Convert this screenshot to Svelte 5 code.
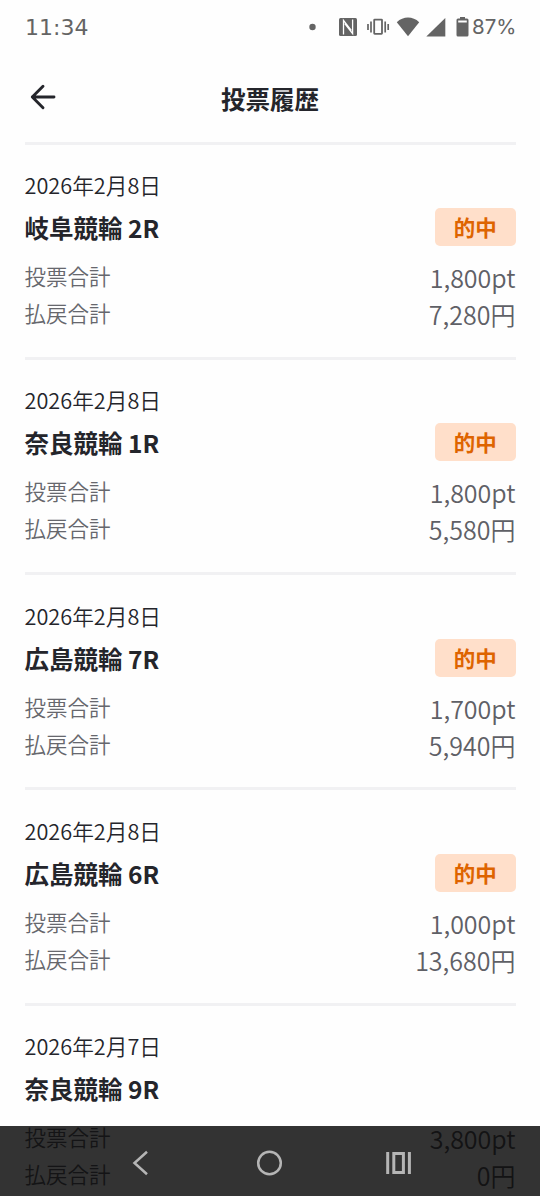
<script lang="ts">
	interface Vote {
		id: number;
		date: string;
		race: string;
		hit: boolean;
		total: string;
		payout: string;
	}

	const votes: Vote[] = [
		{ id: 1, date: '2026年2月8日', race: '岐阜競輪 2R', hit: true, total: '1,800pt', payout: '7,280円' },
		{ id: 2, date: '2026年2月8日', race: '奈良競輪 1R', hit: true, total: '1,800pt', payout: '5,580円' },
		{ id: 3, date: '2026年2月8日', race: '広島競輪 7R', hit: true, total: '1,700pt', payout: '5,940円' },
		{ id: 4, date: '2026年2月8日', race: '広島競輪 6R', hit: true, total: '1,000pt', payout: '13,680円' },
		{ id: 5, date: '2026年2月7日', race: '奈良競輪 9R', hit: false, total: '3,800pt', payout: '0円' }
	];
</script>

<div class="screen">
	<div class="status">
		<span class="clock">11:34</span>
		<svg class="status-icons" viewBox="0 0 172 30" fill="#646464">
			<circle cx="12.5" cy="15" r="3.2" />
			<!-- nfc -->
			<rect x="39" y="6" width="18" height="18" rx="1.5" />
			<path d="M43.500 22.500V8.300L51.300 18.500M52.600 7.500v14.200L44.800 11.500" fill="none" stroke="#fff" stroke-width="1.300" />
			<!-- vibrate -->
			<rect x="74.2" y="7.6" width="7.8" height="14.2" rx=".5" fill="none" stroke="#646464" stroke-width="1.8" />
			<path d="M71 9.5v11M68 12v6M85.2 9.5v11M88.2 12v6" stroke="#646464" stroke-width="1.7" />
			<!-- wifi -->
			<path d="M96.8 10.2C103.3 4 112.7 4 119.2 10.2L108 24.2z" />
			<!-- signal -->
			<path d="M145.3 6v18.5h-19z" />
			<!-- battery -->
			<path fill-rule="evenodd" d="M160 5h5v1.5h2a1.5 1.5 0 0 1 1.5 1.5v15a1.5 1.5 0 0 1-1.5 1.5h-9a1.5 1.5 0 0 1-1.5-1.5V8A1.5 1.5 0 0 1 158 6.5h2zM158.200 8.500v2h8.600v-2z" />
		</svg>
		<span class="battery">87%</span>
	</div>

	<header>
		<button class="back" aria-label="戻る">
			<svg viewBox="0 0 26 26" fill="none" stroke="#24252b" stroke-width="2.9" stroke-linecap="round" stroke-linejoin="round">
				<path d="M13 2.200L2.300 13L13 23.800M2.300 13h21.700" />
			</svg>
		</button>
		<h1>投票履歴</h1>
	</header>

	<main>
		{#each votes as vote (vote.id)}
			<section class="vote">
				<div class="date">{vote.date}</div>
				<div class="race">
					<h2>{vote.race}</h2>
					{#if vote.hit}
						<span class="badge">的中</span>
					{/if}
				</div>
				<div class="row">
					<span class="label">投票合計</span>
					<span class="amount">{vote.total}</span>
				</div>
				<div class="row">
					<span class="label">払戻合計</span>
					<span class="amount">{vote.payout}</span>
				</div>
			</section>
		{/each}
	</main>

	<nav>
		<svg viewBox="0 0 540 70" fill="none" stroke="#b5b5b5" stroke-width="2.5">
			<path d="M147 25.8L134.5 37l12.5 11.2" />
			<circle cx="269.5" cy="37" r="11.3" />
			<path d="M387.7 26v22M409.4 26v22" stroke-width="3" />
			<rect x="393.8" y="27.5" width="9.6" height="19" stroke-width="3" />
		</svg>
	</nav>
</div>

<style>
	:global(body) {
		margin: 0;
		background: #fefefe;
	}

	.screen {
		position: relative;
		width: 540px;
		height: 1200px;
		overflow: hidden;
		background: #fefefe;
		color: #24252b;
		font-family: 'Noto Sans CJK JP', sans-serif;
		font-weight: 350;
	}

	.status {
		display: flex;
		align-items: center;
		height: 54px;
		padding: 0 24px 0 25px;
		color: #646464;
		font-weight: 400;
		line-height: 30px;
	}

	.clock {
		flex: 1;
		padding-top: 1px;
		font-family: 'DejaVu Sans', sans-serif;
		font-size: 22px;
	}

	.status-icons {
		width: 172px;
		height: 30px;
	}

	.battery {
		width: 44px;
		font-family: Inter, sans-serif;
		font-size: 20.5px;
	}

	header {
		display: grid;
		grid-template-columns: 60px 1fr 60px;
		align-items: center;
		height: 87.5px;
	}

	.back {
		width: 26px;
		height: 26px;
		margin: 0 0 2px 30px;
		padding: 0;
		border: 0;
		background: none;
	}

	.back svg {
		display: block;
		width: 26px;
		height: 26px;
	}

	h1,
	h2 {
		margin: 0;
		padding-top: 2px;
		font-size: 24.5px;
		font-weight: 700;
		line-height: 36px;
	}

	h1 {
		text-align: center;
	}

	.vote {
		box-sizing: border-box;
		height: 215.25px;
		margin: 0 24.5px;
		padding-top: 24.5px;
		border-top: 3px solid #f1f1f3;
	}

	.date {
		font-size: 21.7px;
		line-height: 32px;
	}

	.race {
		display: flex;
		align-items: center;
		justify-content: space-between;
		height: 38px;
		margin: 7px 0 13px;
	}

	.badge {
		width: 80.5px;
		border-radius: 5px;
		background: #ffdfca;
		color: #de6400;
		font-size: 21.5px;
		font-weight: 700;
		line-height: 38px;
		text-align: center;
	}

	.row {
		display: flex;
		align-items: flex-start;
		justify-content: space-between;
		height: 37px;
		color: #66676d;
	}

	.label {
		font-size: 21.5px;
		line-height: 34px;
	}

	.amount {
		color: #5f6066;
		font-size: 25px;
		line-height: 37px;
	}

	/* system navigation lies over the scrolling list */
	nav {
		position: absolute;
		left: 0;
		bottom: 4px;
		width: 540px;
		height: 70px;
		background: rgba(0, 0, 0, 0.8);
		box-shadow: 0 4px 0 #fefefe;
	}

	nav svg {
		display: block;
		width: 540px;
		height: 70px;
	}
</style>
